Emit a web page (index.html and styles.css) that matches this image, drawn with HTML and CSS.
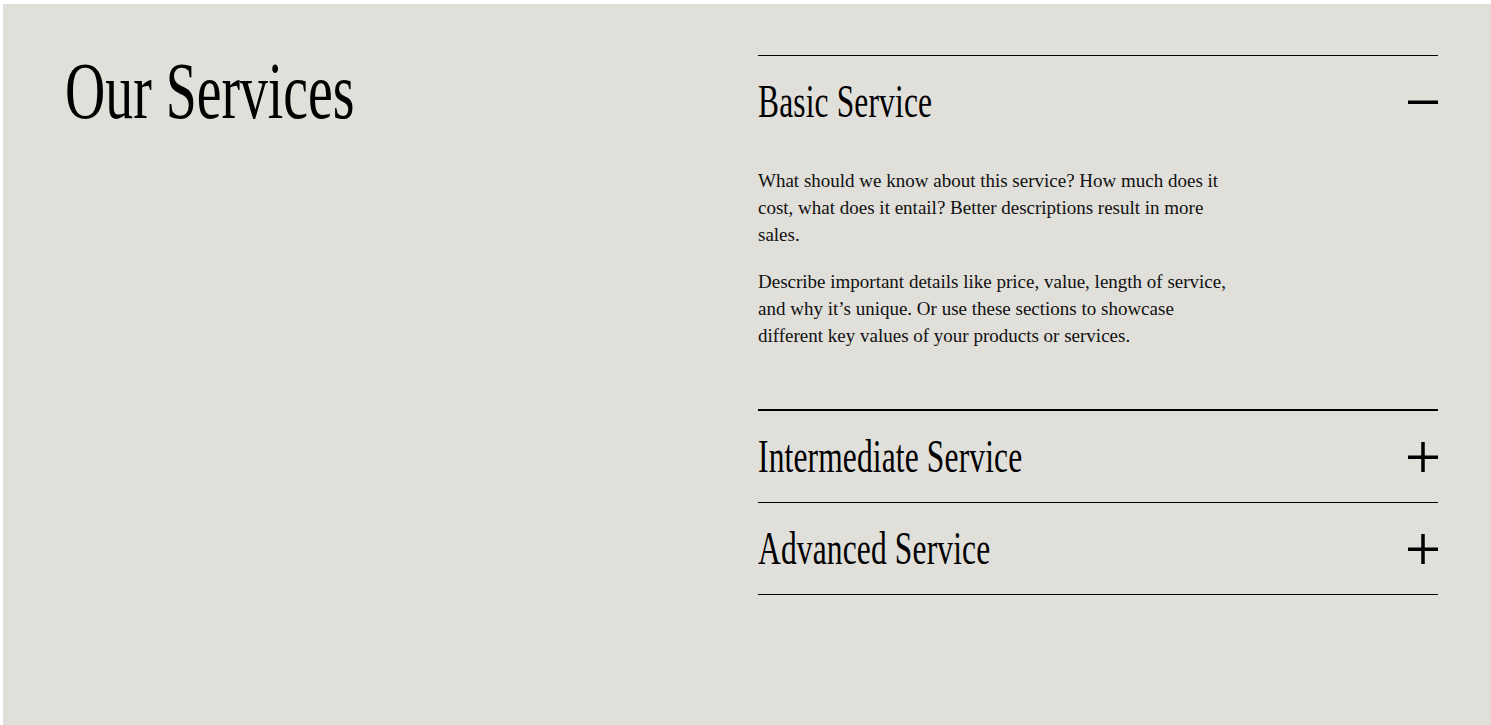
FILE: index.html
```html
<!DOCTYPE html>
<html lang="en">
<head>
<meta charset="utf-8">
<title>Our Services</title>
<link rel="stylesheet" href="styles.css">
</head>
<body>
<section class="services">
  <div class="intro">
    <h2 class="heading"><span class="condensed">Our Services</span></h2>
  </div>
  <div class="accordion">
    <div class="item open">
      <div class="item-header">
        <h3 class="item-title"><span class="condensed">Basic Service</span></h3>
        <svg class="icon" width="30" height="30" viewBox="0 0 30 30" aria-hidden="true"><rect x="0" y="13.5" width="30" height="3.5" fill="#000"/></svg>
      </div>
      <div class="item-body">
        <p>What should we know about this service? How much does it cost, what does it entail? Better descriptions result in more sales.</p>
        <p>Describe important details like price, value, length of service, and why it’s unique. Or use these sections to showcase different key values of your products or services.</p>
      </div>
    </div>
    <div class="item">
      <div class="item-header">
        <h3 class="item-title"><span class="condensed">Intermediate Service</span></h3>
        <svg class="icon" width="30" height="30" viewBox="0 0 30 30" aria-hidden="true"><rect x="0" y="13.5" width="30" height="3.5" fill="#000"/><rect x="13.25" y="0" width="3.5" height="30" fill="#000"/></svg>
      </div>
    </div>
    <div class="item last">
      <div class="item-header">
        <h3 class="item-title"><span class="condensed">Advanced Service</span></h3>
        <svg class="icon" width="30" height="30" viewBox="0 0 30 30" aria-hidden="true"><rect x="0" y="13.5" width="30" height="3.5" fill="#000"/><rect x="13.25" y="0" width="3.5" height="30" fill="#000"/></svg>
      </div>
    </div>
  </div>
</section>
</body>
</html>
```
FILE: styles.css
```css
html {
  background: #ffffff;
}
body {
  margin: 4px 0 0 3px;
  font-family: "Liberation Serif", "Times New Roman", serif;
  color: #000;
}
.services {
  background: #e0dfda;
  height: 721px;
  box-sizing: border-box;
  padding: 51px 53px 0 62px;
  display: grid;
  grid-template-columns: 1fr 1fr;
  column-gap: 13px;
  align-items: start;
}
.heading {
  margin: 0;
  font-weight: 400;
  font-size: 80px;
  line-height: 72px;
  white-space: nowrap;
}
.condensed {
  display: inline-block;
  transform-origin: left center;
  white-space: nowrap;
}
.heading .condensed {
  transform: scaleX(0.697);
}
.accordion {
  display: flex;
  flex-direction: column;
}
.item {
  border-top: 1px solid #000;
}
.item.open,
.item.last {
  border-bottom: 1px solid #000;
}
.item-header {
  height: 91px;
  display: flex;
  align-items: center;
  justify-content: space-between;
}
.item-title {
  margin: 0;
  font-weight: 400;
  font-size: 46px;
  line-height: 91px;
  letter-spacing: 0.2px;
}
.item-title .condensed {
  transform: scaleX(0.685);
}
.icon {
  display: block;
  flex: none;
}
.item-body {
  padding: 20px 0 60px;
  max-width: 480px;
  font-size: 19px;
  line-height: 27px;
  color: #111;
}
.item-body p {
  margin: 0 0 20px;
}
.item-body p:last-child {
  margin-bottom: 0;
}
```
